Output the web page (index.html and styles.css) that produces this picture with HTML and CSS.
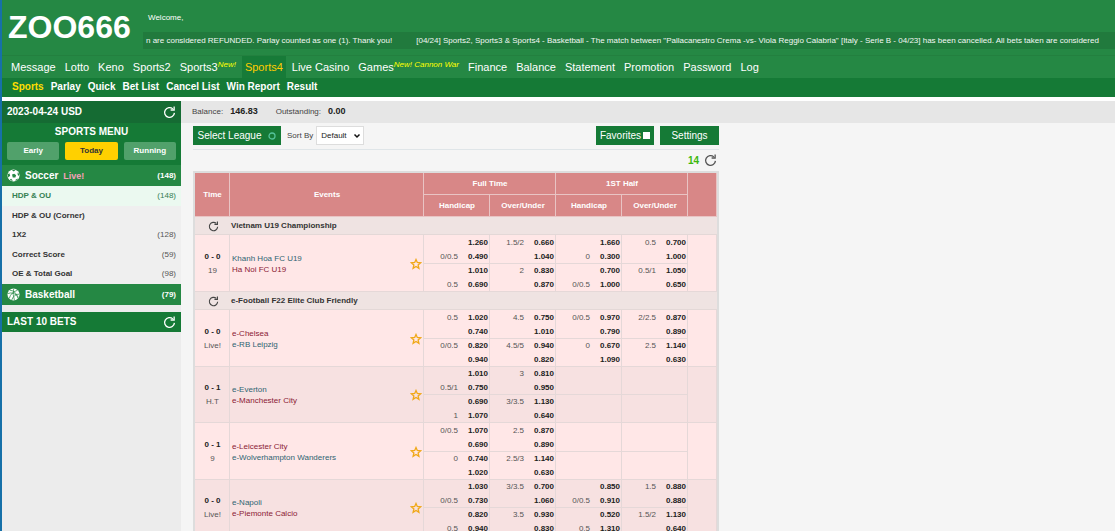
FILE: index.html
```html
<!DOCTYPE html>
<html lang="en">
<head>
<meta charset="utf-8">
<title>ZOO666</title>
<link rel="stylesheet" href="styles.css">
</head>
<body>
<svg class="defs" aria-hidden="true">
  <symbol id="refresh" viewBox="0 0 14 14"><path d="M12.3 7.4A5.3 5.3 0 1 1 10.6 3.1" fill="none" stroke="currentColor" stroke-width="1.4"/><path d="M8.2 4.3H12V.6" fill="none" stroke="currentColor" stroke-width="1.4"/></symbol>
  <symbol id="star" viewBox="0 0 12 12"><path d="M6 1.5L7.3 4.5L10.6 4.8L8.1 7L8.9 10.3L6 8.5L3.1 10.3L3.9 7L1.4 4.8L4.7 4.5Z" fill="none" stroke="currentColor" stroke-width="1.3"/></symbol>
</svg>
<header>
  <div class="top">
    <h1 class="logo">ZOO666</h1>
    <div class="news">
      <p class="welcome">Welcome,</p>
      <p class="ticker"><span>n are considered REFUNDED. Parlay counted as one (1). Thank you!</span><span>[04/24] Sports2, Sports3 &amp; Sports4 - Basketball - The match between "Pallacanestro Crema -vs- Viola Reggio Calabria" [Italy - Serie B - 04/23] has been cancelled. All bets taken are considered</span></p>
    </div>
  </div>
  <nav class="nav">
    <a href="#">Message</a><a href="#">Lotto</a><a href="#">Keno</a><a href="#">Sports2</a><a href="#">Sports3<i>New!</i></a><a href="#" class="current">Sports4</a><a href="#">Live Casino</a><a href="#">Games<i>New! Cannon War</i></a><a href="#">Finance</a><a href="#">Balance</a><a href="#">Statement</a><a href="#">Promotion</a><a href="#">Password</a><a href="#">Log</a>
  </nav>
  <nav class="subnav">
    <a href="#" class="current">Sports</a><a href="#">Parlay</a><a href="#">Quick</a><a href="#">Bet List</a><a href="#">Cancel List</a><a href="#">Win Report</a><a href="#">Result</a>
  </nav>
</header>
<div class="page">
  <aside>
    <div class="bar date"><span>2023-04-24 USD</span><button class="icon" aria-label="Refresh"><svg><use href="#refresh"/></svg></button></div>
    <div class="menu">
      <h2>SPORTS MENU</h2>
      <div class="tabs"><button>Early</button><button class="on">Today</button><button>Running</button></div>
    </div>
    <a href="#" class="bar sport">
      <svg class="ball" viewBox="0 0 14 14"><circle cx="7" cy="7" r="6.5" fill="#fff"/><path d="M5.4 6L7.8 5L9.8 6.6L9 9.2L6.2 9.2ZM5.2 1.1L9.2 1L7.3 2.8ZM.9 5.6L2.6 4.6L3.4 7.2L1.3 9.2ZM11.3 3.7L13 5.2L12.9 7.6L11.6 6.4ZM3 11.4L4.4 10.6L6 12L5.6 13ZM9.2 11.6L11.6 10.2L11.4 11.7L9.2 12.8Z" fill="#258844"/></svg>
      <span>Soccer</span><em>Live!</em><small>(148)</small></a>
    <ul>
      <li class="on"><a href="#">HDP &amp; OU</a><small>(148)</small></li>
      <li><a href="#">HDP &amp; OU (Corner)</a></li>
      <li><a href="#">1X2</a><small>(128)</small></li>
      <li><a href="#">Correct Score</a><small>(59)</small></li>
      <li><a href="#">OE &amp; Total Goal</a><small>(98)</small></li>
    </ul>
    <a href="#" class="bar sport">
      <svg class="ball" viewBox="0 0 14 14"><circle cx="7" cy="7" r="6.5" fill="#fff"/><path d="M.8 6Q7 3.5 12.7 10M3 2.3Q10 3 11.8 11.3M7.2.8Q5.8 7 8 13.2M11.3 2.5Q4 4.5 2.4 11.4M13.2 6.6Q7.5 6.5 5 13" fill="none" stroke="#258844" stroke-width=".8"/></svg>
      <span>Basketball</span><small>(79)</small></a>
    <div class="bar last"><span>LAST 10 BETS</span><button class="icon" aria-label="Refresh bets"><svg><use href="#refresh"/></svg></button></div>
  </aside>
  <main>
    <div class="balance"><span>Balance:</span><b>146.83</b><span class="out">Outstanding:</span><b>0.00</b></div>
    <div class="content">
      <div class="tools">
        <button class="btn league">Select League<svg viewBox="0 0 8 8"><circle cx="4" cy="4" r="3" fill="none" stroke="#54c39a" stroke-width="1.3"/></svg></button>
        <label for="sort">Sort By</label>
        <div class="pick"><select id="sort"><option>Default</option></select><svg viewBox="0 0 8 6"><path d="M1.5 1.5L4 4L6.5 1.5" fill="none" stroke="#111" stroke-width="1.5"/></svg></div>
        <label class="btn fav">Favorites<input type="checkbox"></label>
        <button class="btn set">Settings</button>
      </div>
      <div class="count"><b>14</b><button class="icon" aria-label="Refresh list"><svg><use href="#refresh"/></svg></button></div>
      <table>
        <colgroup><col class="c-time"><col class="c-event"><col class="c-odd"><col class="c-odd"><col class="c-odd"><col class="c-odd"><col></colgroup>
        <thead>
          <tr><th rowspan="2">Time</th><th rowspan="2">Events</th><th colspan="2">Full Time</th><th colspan="2">1ST Half</th><th rowspan="2"></th></tr>
          <tr><th>Handicap</th><th>Over/Under</th><th>Handicap</th><th>Over/Under</th></tr>
        </thead>
        <tbody>
          <tr class="group"><td><button class="icon" aria-label="Refresh league"><svg><use href="#refresh"/></svg></button></td><td colspan="6">Vietnam U19 Championship</td></tr>
        </tbody>
        <tbody class="match">
          <tr><td rowspan="2" class="time"><b>0 - 0</b><p>19</p></td>
            <td rowspan="2"><div class="event"><div><p class="dog">Khanh Hoa FC U19</p><p class="top-team">Ha Noi FC U19</p></div><button class="star" aria-label="Favorite"><svg><use href="#star"/></svg></button></div></td>
            <td><p><b>1.260</b></p><p>0/0.5<b>0.490</b></p></td><td><p>1.5/2<b>0.660</b></p><p><b>1.040</b></p></td><td><p><b>1.660</b></p><p>0<b>0.300</b></p></td><td><p>0.5<b>0.700</b></p><p><b>1.000</b></p></td><td rowspan="2"></td></tr>
          <tr><td><p><b>1.010</b></p><p>0.5<b>0.690</b></p></td><td><p>2<b>0.830</b></p><p><b>0.870</b></p></td><td><p><b>0.700</b></p><p>0/0.5<b>1.000</b></p></td><td><p>0.5/1<b>1.050</b></p><p><b>0.650</b></p></td></tr>
        </tbody>
        <tbody>
          <tr class="group"><td><button class="icon" aria-label="Refresh league"><svg><use href="#refresh"/></svg></button></td><td colspan="6">e-Football F22 Elite Club Friendly</td></tr>
        </tbody>
        <tbody class="match">
          <tr><td rowspan="2" class="time"><b>0 - 0</b><p>Live!</p></td>
            <td rowspan="2"><div class="event"><div><p class="top-team">e-Chelsea</p><p class="dog">e-RB Leipzig</p></div><button class="star" aria-label="Favorite"><svg><use href="#star"/></svg></button></div></td>
            <td><p>0.5<b>1.020</b></p><p><b>0.740</b></p></td><td><p>4.5<b>0.750</b></p><p><b>1.010</b></p></td><td><p>0/0.5<b>0.970</b></p><p><b>0.790</b></p></td><td><p>2/2.5<b>0.870</b></p><p><b>0.890</b></p></td><td rowspan="2"></td></tr>
          <tr><td><p>0/0.5<b>0.820</b></p><p><b>0.940</b></p></td><td><p>4.5/5<b>0.940</b></p><p><b>0.820</b></p></td><td><p>0<b>0.670</b></p><p><b>1.090</b></p></td><td><p>2.5<b>1.140</b></p><p><b>0.630</b></p></td></tr>
        </tbody>
        <tbody class="match alt">
          <tr><td rowspan="2" class="time"><b>0 - 1</b><p>H.T</p></td>
            <td rowspan="2"><div class="event"><div><p class="dog">e-Everton</p><p class="top-team">e-Manchester City</p></div><button class="star" aria-label="Favorite"><svg><use href="#star"/></svg></button></div></td>
            <td><p><b>1.010</b></p><p>0.5/1<b>0.750</b></p></td><td><p>3<b>0.810</b></p><p><b>0.950</b></p></td><td></td><td></td><td rowspan="2"></td></tr>
          <tr><td><p><b>0.690</b></p><p>1<b>1.070</b></p></td><td><p>3/3.5<b>1.130</b></p><p><b>0.640</b></p></td><td></td><td></td></tr>
        </tbody>
        <tbody class="match">
          <tr><td rowspan="2" class="time"><b>0 - 1</b><p>9</p></td>
            <td rowspan="2"><div class="event"><div><p class="top-team">e-Leicester City</p><p class="dog">e-Wolverhampton Wanderers</p></div><button class="star" aria-label="Favorite"><svg><use href="#star"/></svg></button></div></td>
            <td><p>0/0.5<b>1.070</b></p><p><b>0.690</b></p></td><td><p>2.5<b>0.870</b></p><p><b>0.890</b></p></td><td></td><td></td><td rowspan="2"></td></tr>
          <tr><td><p>0<b>0.740</b></p><p><b>1.020</b></p></td><td><p>2.5/3<b>1.140</b></p><p><b>0.630</b></p></td><td></td><td></td></tr>
        </tbody>
        <tbody class="match alt">
          <tr><td rowspan="2" class="time"><b>0 - 0</b><p>Live!</p></td>
            <td rowspan="2"><div class="event"><div><p class="dog">e-Napoli</p><p class="top-team">e-Piemonte Calcio</p></div><button class="star" aria-label="Favorite"><svg><use href="#star"/></svg></button></div></td>
            <td><p><b>1.030</b></p><p>0/0.5<b>0.730</b></p></td><td><p>3/3.5<b>0.700</b></p><p><b>1.060</b></p></td><td><p><b>0.850</b></p><p>0/0.5<b>0.910</b></p></td><td><p>1.5<b>0.880</b></p><p><b>0.880</b></p></td><td rowspan="2"></td></tr>
          <tr><td><p><b>0.820</b></p><p>0.5<b>0.940</b></p></td><td><p>3.5<b>0.930</b></p><p><b>0.830</b></p></td><td><p><b>0.520</b></p><p>0.5<b>1.310</b></p></td><td><p>1.5/2<b>1.130</b></p><p><b>0.640</b></p></td></tr>
        </tbody>
      </table>
    </div>
  </main>
</div>
</body>
</html>
```
FILE: styles.css
```css
* { box-sizing: border-box; }
body {
  margin: 0; height: 100vh; overflow: hidden;
  display: flex; flex-direction: column;
  border-left: 2px solid #1670a8;
  background: #f5f5f5; color: #444;
  font: 8px/14px "Liberation Sans", Arial, sans-serif;
}
h1, h2, p, ul { margin: 0; padding: 0; }
a { color: inherit; text-decoration: none; }
button { font: inherit; color: inherit; border: 0; padding: 0; background: none; }
svg { display: block; }
.defs { display: none; }
header { flex: none; background: #258844; color: #fff; border-bottom: 4px solid #fff; }
.top { display: flex; height: 55px; }
.logo { flex: none; width: 141px; padding-left: 6px; font-size: 32px; line-height: 55px; }
.news { flex: 1; min-width: 0; padding-top: 10px; }
.welcome { padding-left: 5px; line-height: 16px; margin-bottom: 6px; }
.ticker {
  display: flex; gap: 24px; height: 17px; padding-left: 3px; overflow: hidden;
  background: #217a3d; color: #f2f8f3; line-height: 17px; white-space: nowrap;
}
.nav { display: flex; gap: 3px; height: 23px; padding-left: 6px; border-top: 1px solid #23803f; font-size: 11px; line-height: 22px; white-space: nowrap; }
.nav a { padding: 0 3px; }
.nav i { color: #ff0; font-size: 8px; line-height: 8px; vertical-align: 4px; }
.nav .current { background: #177b38; color: #fc0; }
.subnav { display: flex; gap: 7px; height: 19px; padding-left: 10px; background: #157a36; font-size: 10px; font-weight: bold; line-height: 18px; }
.subnav .current { color: #fd0; }
.page { flex: 1; display: flex; min-height: 0; }
aside { flex: none; width: 179px; background: #ececec; }
.bar { display: flex; align-items: center; height: 21px; padding: 0 5px; color: #fff; background: #157a36; font-size: 10px; font-weight: bold; }
.bar .icon { margin-left: auto; }
.icon svg { width: 13px; height: 13px; }
.date { background: #156b33; height: 22px; }
.menu { height: 42px; padding: 2px 5px 0; background: #157a36; color: #fff; }
.menu h2 { font-size: 10px; line-height: 14px; text-align: center; margin-bottom: 3px; }
.tabs { display: grid; grid-template-columns: repeat(3, 1fr); gap: 6px; }
.tabs button { height: 18px; border-radius: 2px; background: #51a16b; font-size: 8px; font-weight: bold; }
.tabs .on { background: #ffd000; color: #333; }
.sport { background: #258844; gap: 5px; }
.ball { width: 13px; height: 13px; }
.sport em { font-size: 9px; font-style: normal; color: #f4a0b8; }
small { font-size: 8px; margin-left: auto; }
ul { list-style: none; background: #efefef; }
li { display: flex; align-items: center; height: 19px; padding: 0 5px 0 10px; color: #333; }
li:nth-child(odd) { height: 20px; }
li a { font-weight: bold; }
li small { color: #555; }
li.on, li.on small { background: #ebf9f0; color: #358053; }
.last { margin-top: 7px; height: 20px; }
main { flex: 1; min-width: 0; }
.balance { display: flex; height: 22px; padding-left: 11px; gap: 7px; background: #e6e6e6; line-height: 21px; }
.balance b { font-size: 9px; color: #222; }
.out { margin-left: 11px; }
.content { width: 538px; padding: 0 0 0 12px; }
.tools { display: flex; align-items: center; height: 27px; padding-bottom: 1px; border-bottom: 1px solid #dfe5e8; }
.tools > label { color: #444; }
.btn { display: flex; align-items: center; justify-content: center; height: 19px; background: #157a36; font-size: 10px; }
.btn, .tools .btn { color: #fff; }
.league { width: 88px; gap: 7px; margin-right: 6px; }
.league svg { width: 8px; height: 8px; }
.pick { position: relative; width: 48px; margin-left: 3px; }
.pick select { appearance: none; display: block; width: 100%; height: 19px; padding: 0 4px; border: 1px solid #ddd; background: #fff; color: #222; font: inherit; }
.pick svg { position: absolute; right: 3px; top: 7px; width: 8px; height: 6px; }
.fav { width: 58px; gap: 2px; margin-left: auto; }
.fav input { appearance: none; margin: 0; width: 7px; height: 7px; background: #fff; }
.set { width: 59px; margin-left: 6px; }
.count { display: flex; align-items: center; justify-content: flex-end; gap: 5px; height: 21px; padding-right: 2px; color: #555; }
.count b { color: #3cb80c; font-size: 10px; }
table { width: 100%; table-layout: fixed; border: 2px solid #ddd; border-spacing: 0; }
.c-time { width: 35px; }
.c-event { width: 194px; }
.c-odd { width: 66px; }
th, td { padding: 0; }
th { height: 22px; background: #d88787; color: #fff; font-size: 8px; box-shadow: inset -1px -1px #e9c4c4; }
.group td { height: 18px; background: #efe3e2; color: #333; font-weight: bold; box-shadow: inset 0 -1px #e3d8d7; padding-left: 1px; }
.group .icon { display: block; margin: 0 auto; }
.group svg { width: 11px; height: 11px; color: #444; }
.match td { background: #ffe7e7; box-shadow: inset -1px -1px #e5d8d8; height: 28px; }
.match tr:first-child td { height: 29px; }
.match.alt td { background: #f7e1e1; }
.match.alt tr:first-child td { height: 28px; }
.match td > p { display: flex; justify-content: flex-end; height: 14px; padding-right: 2px; color: #555; }
.match td > p b { width: 30px; text-align: right; color: #222; }
.match .time { text-align: center; }
.match .time b { color: #222; }
.match .time p { justify-content: center; padding: 0; }
.event { display: flex; align-items: center; justify-content: space-between; padding: 0 2px; line-height: 11px; }
.dog { color: #2f6472; }
.top-team { color: #8b1a35; }
.star { display: block; color: #f0a818; }
.star svg { width: 12px; height: 12px; }
```
